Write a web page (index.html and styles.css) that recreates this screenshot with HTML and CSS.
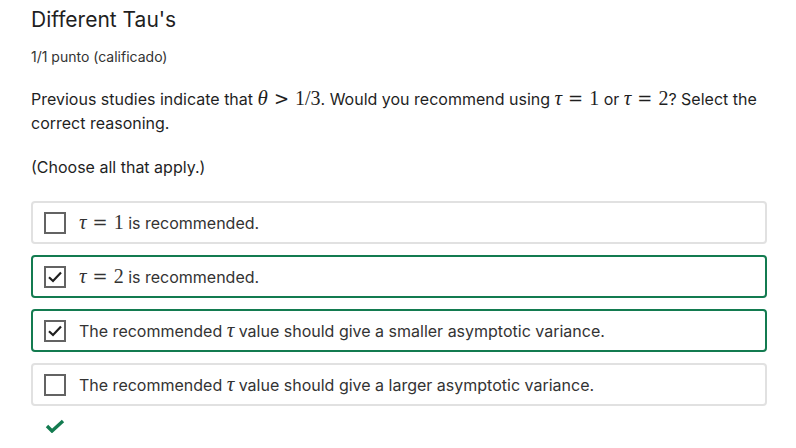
FILE: index.html
```html
<!DOCTYPE html>
<html lang="en">
<head>
<meta charset="utf-8">
<title>Different Tau's</title>
<link rel="stylesheet" href="styles.css">
</head>
<body>
<main class="question">
  <h1 class="title">Different Tau's</h1>
  <div class="points">1/1 punto (calificado)</div>
  <p class="prompt">Previous studies indicate that <span class="math"><i>θ</i><span class="rel">&gt;</span>1/3</span>. Would you recommend using <span class="math"><i>τ</i><span class="rel">=</span>1</span> or <span class="math"><i>τ</i><span class="rel">=</span>2</span>? Select the correct reasoning.</p>
  <p class="hint">(Choose all that apply.)</p>
  <div class="options">
    <div class="option">
      <span class="box"></span>
      <span class="label"><span class="math"><i>τ</i><span class="rel">=</span>1</span> is recommended.</span>
    </div>
    <div class="option selected">
      <span class="box"><svg viewBox="0 0 18 18" width="18" height="18"><path d="M3 9.3 L7 13 L15 4.6" fill="none" stroke="#1f1f1f" stroke-width="2.2"/></svg></span>
      <span class="label"><span class="math"><i>τ</i><span class="rel">=</span>2</span> is recommended.</span>
    </div>
    <div class="option selected">
      <span class="box"><svg viewBox="0 0 18 18" width="18" height="18"><path d="M3 9.3 L7 13 L15 4.6" fill="none" stroke="#1f1f1f" stroke-width="2.2"/></svg></span>
      <span class="label">The recommended <span class="math"><i>τ</i></span> value should give a smaller asymptotic variance.</span>
    </div>
    <div class="option">
      <span class="box"></span>
      <span class="label">The recommended <span class="math"><i>τ</i></span> value should give a larger asymptotic variance.</span>
    </div>
  </div>
  <div class="result">
    <svg viewBox="0 0 20 14" width="20" height="14"><path d="M2 7 L7 12 L18 2" fill="none" stroke="#137b50" stroke-width="3.4"/></svg>
  </div>
</main>
</body>
</html>
```
FILE: styles.css
```css
html, body {
  margin: 0;
  padding: 0;
  background: #ffffff;
}
body {
  font-family: Inter, "Noto Sans", sans-serif;
  color: #1f1f1f;
}
.question {
  padding: 6px 29px 0 31px;
}
.title {
  margin: 0;
  font-size: 21px;
  font-weight: 400;
  line-height: 28px;
  color: #1f1f1f;
}
.points {
  margin-top: 14px;
  font-size: 14px;
  line-height: 18px;
  color: #333;
}
.prompt {
  margin: 21px 0 0;
  font-size: 16px;
  line-height: 24px;
  color: #1f1f1f;
}
.hint {
  margin: 20px 0 0;
  font-size: 16px;
  line-height: 24px;
  color: #1f1f1f;
}
.math {
  font-family: "Liberation Serif", "DejaVu Serif", serif;
  font-size: 20px;
  line-height: 1;
  white-space: nowrap;
}
.math i {
  font-family: "Liberation Serif", "DejaVu Serif", serif;
  font-style: italic;
  font-size: 21px;
}
.rel {
  font-family: "DejaVu Serif", serif;
  font-size: 18px;
  margin: 0 6px;
}
.options {
  margin-top: 22px;
  display: flex;
  flex-direction: column;
  gap: 11px;
}
.option {
  height: 39px;
  border: 2px solid #e1e1e1;
  border-radius: 4px;
  display: flex;
  align-items: center;
  padding-left: 11px;
  font-size: 16px;
  color: #333;
}
.option.selected {
  border-color: #137b50;
}
.box {
  box-sizing: border-box;
  width: 22px;
  height: 22px;
  border: 2px solid #636363;
  flex: none;
  display: flex;
  align-items: center;
  justify-content: center;
}
.label {
  margin-left: 13px;
}
.result {
  margin-top: 13px;
  padding-left: 14px;
}
.result svg {
  display: block;
}
```
